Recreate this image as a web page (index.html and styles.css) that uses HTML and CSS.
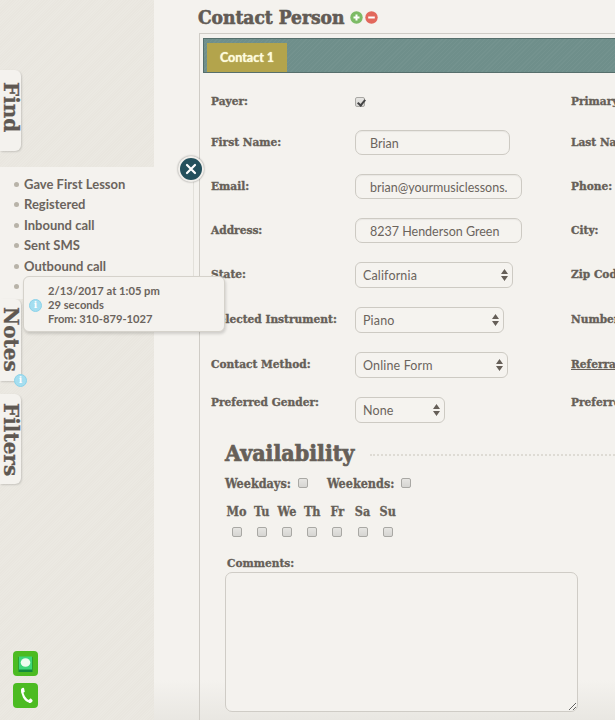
FILE: index.html
```html
<!DOCTYPE html>
<html lang="en">
<head>
  <meta charset="UTF-8">
  <meta name="viewport" content="width=device-width, initial-scale=1.0">
  <title>Contact Person</title>
  <link rel="stylesheet" href="styles.css">
</head>
<body>
  <aside class="sidebar">
    <div class="side-tab tab-find">Find</div>

    <div class="notes-panel">
      <button class="close-btn" type="button" aria-label="Close">
        <svg width="12" height="12" viewBox="0 0 12 12"><path d="M2 2l8 8M10 2l-8 8" stroke="#fff" stroke-width="2.2" stroke-linecap="round"/></svg>
      </button>
      <ul class="notes-list">
        <li>Gave First Lesson</li>
        <li>Registered</li>
        <li>Inbound call</li>
        <li>Sent SMS</li>
        <li>Outbound call</li>
        <li>&nbsp;</li>
      </ul>
      <div class="tooltip">
        <span class="info-dot tooltip-dot">i</span>
        <div>2/13/2017 at 1:05 pm</div>
        <div>29 seconds</div>
        <div>From: 310-879-1027</div>
      </div>
    </div>

    <div class="side-tab tab-notes">Notes<span class="info-dot badge-dot">i</span></div>
    <div class="side-tab tab-filters">Filters</div>

    <div class="side-tools">
      <div class="tool-btn">
        <svg width="15" height="16" viewBox="0 0 15 16">
          <rect x="0.500" y="1" width="14" height="15" fill="#138a3c"/>
          <rect x="1" y="0.500" width="13" height="13" fill="#3fd67a"/>
          <ellipse cx="7.500" cy="6.500" rx="4.800" ry="4.300" fill="#eefcf0"/>
        </svg>
      </div>
      <div class="tool-btn">
        <svg width="14" height="18" viewBox="0 0 14 18">
          <path d="M3.500 3C2.500 7 6 13.500 10.500 14.500" fill="none" stroke="#fff" stroke-width="2.200"/>
          <path d="M2 3.200C1.800 1.800 3.200.600 4.300.800c.6.100.8.500.9 1l.6 3.300-3.100 1C2.300 5.200 2.100 4.200 2 3.200zM9 13.800l2-2c.4-.3.800-.3 1.200 0l1.200 1.300c.4.500.3 1-.2 1.600-.8 1-2.100 1.600-3.200 1.300z" fill="#fff"/>
        </svg>
      </div>
    </div>
  </aside>

  <main class="main">
    <div class="title-row">
      <h1>Contact Person</h1>
      <svg class="round-icon" width="13" height="13" viewBox="0 0 13 13"><circle cx="6.500" cy="6.500" r="6.200" fill="#7dbb66"/><path d="M6.500 3.500v6M3.500 6.500h6" stroke="#fff" stroke-width="2"/></svg>
      <svg class="round-icon" width="13" height="13" viewBox="0 0 13 13"><circle cx="6.500" cy="6.500" r="6.200" fill="#e2685c"/><path d="M3.200 6.500h6.600" stroke="#fff" stroke-width="2"/></svg>
    </div>

    <section class="card">
      <div class="tab-bar"><div class="tab-active">Contact 1</div></div>

      <form class="contact-form">
        <div class="row">
          <div class="field"><label>Payer:</label><input class="check check-payer" type="checkbox" checked></div>
          <div class="field"><label>Primary Contact:</label></div>
        </div>
        <div class="row">
          <div class="field"><label>First Name:</label><input class="text-input w-155" type="text" value="Brian"></div>
          <div class="field"><label>Last Name:</label></div>
        </div>
        <div class="row">
          <div class="field"><label>Email:</label><input class="text-input w-167" type="text" value="brian@yourmusiclessons.com"></div>
          <div class="field"><label>Phone:</label></div>
        </div>
        <div class="row">
          <div class="field"><label>Address:</label><input class="text-input w-167" type="text" value="8237 Henderson Green"></div>
          <div class="field"><label>City:</label></div>
        </div>
        <div class="row">
          <div class="field"><label>State:</label><select class="w-158"><option>California</option></select></div>
          <div class="field"><label>Zip Code:</label></div>
        </div>
        <div class="row">
          <div class="field"><label>Selected Instrument:</label><select class="w-149"><option>Piano</option></select></div>
          <div class="field"><label>Number of Students:</label></div>
        </div>
        <div class="row row-tight">
          <div class="field"><label>Contact Method:</label><select class="w-153"><option>Online Form</option></select></div>
          <div class="field"><label class="link-label">Referral Source:</label></div>
        </div>
        <div class="row row-gender">
          <div class="field"><label>Preferred Gender:</label><select class="w-90"><option>None</option></select></div>
          <div class="field"><label>Preferred Time:</label></div>
        </div>

        <div class="availability">
          <div class="avail-head">
            <h2>Availability</h2>
            <span class="dots"></span>
          </div>
          <div class="week-row">
            <span class="week-label">Weekdays:</span><input class="check" type="checkbox">
            <span class="week-label week-second">Weekends:</span><input class="check" type="checkbox">
          </div>
          <div class="days">
            <span>Mo</span><span>Tu</span><span>We</span><span>Th</span><span>Fr</span><span>Sa</span><span>Su</span>
            <input class="check" type="checkbox"><input class="check" type="checkbox"><input class="check" type="checkbox"><input class="check" type="checkbox"><input class="check" type="checkbox"><input class="check" type="checkbox"><input class="check" type="checkbox">
          </div>
          <div class="comments-label">Comments:</div>
          <textarea class="comments"></textarea>
        </div>
      </form>
    </section>
  </main>
</body>
</html>
```

FILE: styles.css
```css
html, body {
  margin: 0;
  padding: 0;
  height: 100%;
}

body {
  display: flex;
  height: 720px;
  overflow: hidden;
  font-family: 'Lato', sans-serif;
  background-color: #f4f2ee;
  color: #665f58;
}

/* left column */
.sidebar {
  position: relative;
  z-index: 2;
  flex: 0 0 154px;
  width: 154px;
  box-sizing: border-box;
  padding-top: 70px;
  display: flex;
  flex-direction: column;
  background-color: #e9e6df;
  background-image: repeating-linear-gradient(135deg, rgba(255, 255, 255, 0.1) 0 1px, transparent 1px 2px);
}

.side-tab {
  position: relative;
  width: 21px;
  box-sizing: border-box;
  background-color: #f4f2ee;
  border-radius: 0 6px 6px 0;
  box-shadow: 1px 1px 2px rgba(0, 0, 0, 0.15);
  writing-mode: vertical-rl;
  font-family: 'DejaVu Serif', serif;
  font-weight: bold;
  font-size: 20px;
  line-height: 21px;
  -webkit-text-stroke: 0.3px #5f5852;
  color: #5f5852;
}

.tab-find {
  height: 81px;
  padding-top: 12px;
  margin-bottom: 16px;
}

.tab-notes {
  height: 82px;
  padding-top: 8px;
  margin-bottom: 13px;
}

.tab-filters {
  height: 90px;
  padding-top: 9px;
}

.notes-panel {
  position: relative;
  width: 194px;
  height: 132px;
  box-sizing: border-box;
  background-color: #f4f2ee;
  border-right: 1px solid #e2e0da;
}

.notes-list {
  list-style: none;
  margin: 0;
  padding: 7px 0 0 24px;
  font-size: 13px;
  font-weight: bold;
  line-height: 20.4px;
  color: #6b645d;
}

.notes-list li {
  position: relative;
}

.notes-list li::before {
  content: "";
  position: absolute;
  left: -10px;
  top: 8px;
  width: 5px;
  height: 5px;
  border-radius: 50%;
  background-color: #b8b3a8;
}

.close-btn {
  position: absolute;
  top: -11px;
  right: -11px;
  width: 26px;
  height: 26px;
  padding: 0;
  display: flex;
  align-items: center;
  justify-content: center;
  background-color: #24505c;
  border: 2px solid #f1efeb;
  border-radius: 50%;
  box-shadow: 0 0 2px rgba(0, 0, 0, 0.45);
}

.tooltip {
  position: absolute;
  left: 23px;
  top: 109px;
  width: 202px;
  height: 56px;
  box-sizing: border-box;
  padding: 7px 0 0 24px;
  background-color: #f4f2ee;
  border: 1px solid #d5d2cb;
  border-radius: 6px;
  box-shadow: 1px 2px 3px rgba(0, 0, 0, 0.15);
  font-size: 11.2px;
  font-weight: bold;
  line-height: 14px;
  color: #6b645d;
}

.info-dot {
  position: absolute;
  width: 13px;
  height: 13px;
  box-sizing: border-box;
  border-radius: 50%;
  background-color: #a5def0;
  border: 1px solid #8bd3ea;
  font-family: 'DejaVu Serif', serif;
  font-size: 9px;
  font-weight: bold;
  font-style: normal;
  line-height: 11px;
  text-align: center;
  color: #fff;
  -webkit-text-stroke: 0;
  writing-mode: horizontal-tb;
}

.tooltip-dot {
  left: 5px;
  top: 22px;
}

.badge-dot {
  left: 14px;
  top: 75px;
}

.side-tools {
  margin-top: auto;
  padding: 0 0 12px 13px;
  display: flex;
  flex-direction: column;
  gap: 7px;
}

.tool-btn {
  width: 25px;
  height: 25px;
  display: flex;
  align-items: center;
  justify-content: center;
  background-color: #4cbb22;
  border-radius: 4px;
}

/* main column */
.main {
  flex: 1;
  min-width: 0;
  overflow: hidden;
  padding-left: 45px;
  background: linear-gradient(to bottom, #f4f2ee 0, #f4f2ee 680px, #e9e7e2 720px);
}

.title-row {
  height: 33px;
  margin-left: -1px;
  display: flex;
  align-items: center;
  gap: 2px;
}

.title-row h1 {
  margin: 0 4px 0 0;
  font-family: 'DejaVu Serif Condensed', 'DejaVu Serif', serif;
  font-stretch: condensed;
  font-weight: bold;
  font-size: 19px;
  -webkit-text-stroke: 0.6px #625b55;
  color: #625b55;
  white-space: nowrap;
}

.round-icon {
  flex: none;
  margin-top: 2px;
}

.card {
  width: 800px;
  height: 700px;
  box-sizing: border-box;
  padding: 4px 0 0 3px;
  border: 1px solid #cfccc6;
  border-width: 1px 0 0 1px;
}

.tab-bar {
  height: 35px;
  box-sizing: border-box;
  padding: 4px 0 0 3px;
  background-color: #6f8f8b;
  background-image: repeating-linear-gradient(135deg, rgba(255, 255, 255, 0.03) 0 1px, transparent 1px 3px);
  border: 1px solid #566f6c;
}

.tab-active {
  width: 80px;
  height: 29px;
  background-color: #b3a44c;
  font-size: 12.5px;
  font-weight: bold;
  line-height: 29px;
  text-align: center;
  color: #fdfbdc;
  text-shadow: 0 0 1px #fdfbdc;
}

.contact-form {
  padding: 16px 0 0 8px;
}

.row {
  display: flex;
  margin-bottom: 19px;
}

.row-tight {
  margin-bottom: 12px;
}

.field {
  flex: 0 0 360px;
  display: flex;
  align-items: flex-start;
}

.field label {
  flex: 0 0 144px;
  margin-top: 2px;
  font-family: 'DejaVu Serif Condensed', 'DejaVu Serif', serif;
  font-stretch: condensed;
  font-weight: bold;
  font-size: 11.8px;
  line-height: 20px;
  -webkit-text-stroke: 0.35px #665f58;
  color: #665f58;
  white-space: nowrap;
}

.field .link-label {
  text-decoration: underline;
}

.text-input {
  height: 25px;
  box-sizing: border-box;
  padding: 2px 14px 0 14px;
  background-color: #f5f3ef;
  border: 1px solid #cdcac3;
  border-radius: 7px;
  box-shadow: inset 0 1px 1px rgba(0, 0, 0, 0.05);
  font-family: 'Lato', sans-serif;
  font-size: 12.5px;
  color: #6b645d;
}

select {
  appearance: none;
  height: 26px;
  box-sizing: border-box;
  padding: 0 18px 0 7px;
  background-color: #f5f3ef;
  background-image: url("data:image/svg+xml,%3Csvg xmlns='http://www.w3.org/2000/svg' width='7' height='12'%3E%3Cpath d='M3.500 0L7 5H0zM3.500 12L0 7h7z' fill='%23665f58'/%3E%3C/svg%3E");
  background-repeat: no-repeat;
  background-position: right 4px center;
  border: 1px solid #cdcac3;
  border-radius: 6px;
  font-family: 'Lato', sans-serif;
  font-size: 12.5px;
  letter-spacing: 0.15px;
  color: #6b645d;
}

.row-gender select {
  margin-top: 7px;
}

.w-155 { width: 155px; }
.w-167 { width: 167px; }
.w-158 { width: 158px; }
.w-149 { width: 149px; }
.w-153 { width: 153px; }
.w-90 { width: 90px; }

.check {
  appearance: none;
  position: relative;
  flex: none;
  width: 10px;
  height: 10px;
  margin: 0;
  background: linear-gradient(#e6e5e2, #d6d5d2);
  border: 1px solid #a9a8a4;
  border-radius: 2px;
}

.check-payer {
  margin-top: 8px;
}

.check:checked::after {
  content: "";
  position: absolute;
  left: 3px;
  top: 0;
  width: 3px;
  height: 6px;
  border: solid #444;
  border-width: 0 2px 2px 0;
  transform: rotate(40deg);
}

/* availability */
.availability {
  margin: -5px 0 0 14px;
}

.avail-head {
  height: 30px;
  display: flex;
  align-items: center;
}

.avail-head h2 {
  margin: 0 16px 0 0;
  font-family: 'DejaVu Serif Condensed', 'DejaVu Serif', serif;
  font-stretch: condensed;
  font-weight: bold;
  font-size: 23px;
  -webkit-text-stroke: 0.7px #665f58;
  color: #665f58;
}

.dots {
  flex: 1;
  margin-top: 5px;
  border-top: 2px dotted #dedbd4;
}

.week-row {
  margin-top: 6px;
  height: 20px;
  display: flex;
  align-items: center;
  font-family: 'DejaVu Serif Condensed', 'DejaVu Serif', serif;
  font-stretch: condensed;
  font-weight: bold;
  font-size: 12.5px;
  -webkit-text-stroke: 0.3px #665f58;
}

.week-label {
  width: 73px;
  white-space: nowrap;
}

.week-second {
  margin-left: 19px;
  width: 74px;
}

.days {
  margin: 12px 0 0 -1px;
  display: grid;
  grid-template-columns: repeat(7, 25.2px);
  justify-items: center;
  align-items: center;
  row-gap: 8px;
  font-family: 'DejaVu Serif Condensed', 'DejaVu Serif', serif;
  font-stretch: condensed;
  font-weight: bold;
  font-size: 12.5px;
  line-height: 14px;
  -webkit-text-stroke: 0.3px #665f58;
}

.comments-label {
  margin: 18px 0 0 2px;
  font-family: 'DejaVu Serif Condensed', 'DejaVu Serif', serif;
  font-stretch: condensed;
  font-weight: bold;
  font-size: 11.8px;
  line-height: 16px;
  -webkit-text-stroke: 0.3px #665f58;
}

.comments {
  display: block;
  width: 353px;
  height: 140px;
  margin-top: 1px;
  box-sizing: border-box;
  background-color: #f4f2ee;
  border: 1px solid #cfccc6;
  border-radius: 7px;
}
```
